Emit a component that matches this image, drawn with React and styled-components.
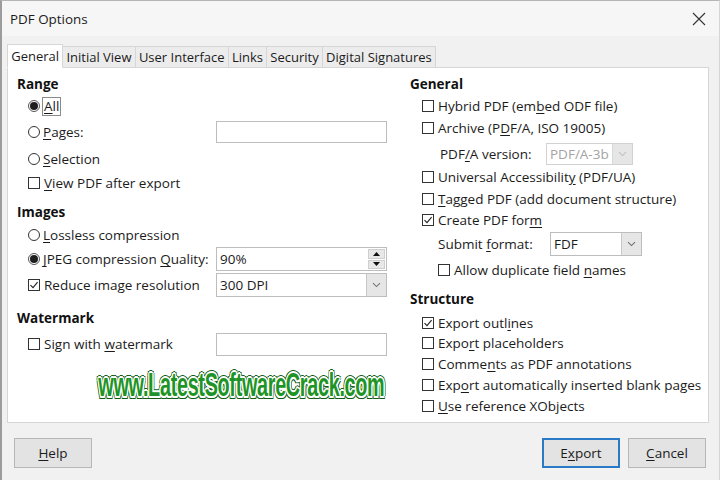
import React from "react";
import styled, { createGlobalStyle } from "styled-components";

const Global = createGlobalStyle`
  html, body { margin: 0; padding: 0; background: #f0f0f0; }
  body { font-family: "Open Sans", "Noto Sans", sans-serif; color: #1b1b1b; }
  * { box-sizing: border-box; }
`;

const Dialog = styled.div`
  position: relative;
  width: 720px;
  height: 480px;
  background: #f1f1f1;
  border-left: 2px solid #9c9c9c;
  border-top: 1px solid #b5b5b5;
  border-right: 1px solid #d6d6d6;
  display: flex;
  flex-direction: column;
  overflow: hidden;
`;

const TitleBar = styled.div`
  height: 35px;
  display: flex;
  align-items: center;
  justify-content: space-between;
  padding: 0 12px 0 8px;
  font-size: 13.4px;
  background: #f6f6f6;
`;

const Close = styled.span`
  display: flex;
  width: 16px;
  height: 16px;
`;

const TabBar = styled.div`
  display: flex;
  align-items: flex-end;
  padding-left: 5px;
  margin-top: 7px;
  height: 24px;
  position: relative;
  z-index: 1;
`;

const Tab = styled.div`
  font-size: 13px;
  padding: 0 3.2px;
  height: ${(p) => (p.$active ? "24px" : "21px")};
  display: flex;
  align-items: center;
  background: ${(p) => (p.$active ? "#ffffff" : "#ececec")};
  border: 1px solid #d6d6d6;
  border-bottom: ${(p) => (p.$active ? "1px solid #ffffff" : "none")};
  margin-left: ${(p) => (p.$active ? "0" : "-1px")};
  margin-bottom: ${(p) => (p.$active ? "-1px" : "0")};
  white-space: nowrap;
`;

const Panel = styled.div`
  margin: 0 10px 0 5px;
  height: 356px;
  background: #ffffff;
  border: 1px solid #d6d6d6;
  display: grid;
  grid-template-columns: 370px 1fr;
  column-gap: 23px;
  padding: 6px 0 0 9px;
`;

const Column = styled.div`
  display: flex;
  flex-direction: column;
`;

const Heading = styled.div`
  height: 20px;
  display: flex;
  align-items: center;
  font-size: 13.5px;
  font-weight: 700;
  margin-top: ${(p) => p.$mt || 0}px;
  color: #111;
`;

const Row = styled.div`
  display: flex;
  align-items: center;
  height: ${(p) => p.$h || 20}px;
  margin-top: ${(p) => p.$mt || 0}px;
  padding-left: ${(p) => p.$indent || 0}px;
  font-size: 13.5px;
  gap: ${(p) => (p.$tight ? 0 : 4)}px;
  white-space: nowrap;
`;

const Mn = styled.span`
  text-decoration: underline;
  text-underline-offset: 2px;
  text-decoration-thickness: 1px;
`;

const Focus = styled.span`
  outline: 1px solid #8a8a8a;
  outline-offset: 0px;
  padding: 0 1px;
  line-height: 17px;
`;

const RadioBox = styled.span`
  width: 12px;
  height: 12px;
  border-radius: 50%;
  border: 1px solid ${(p) => (p.$on ? "#555" : "#333")};
  background: #fff;
  display: inline-flex;
  align-items: center;
  justify-content: center;
  flex: none;
  margin-right: -1px;
  &::after {
    content: "";
    width: 8px;
    height: 8px;
    border-radius: 50%;
    background: #1e1e1e;
    display: ${(p) => (p.$on ? "block" : "none")};
  }
`;

const CheckBox = styled.span`
  width: 12px;
  height: 12px;
  border: 1px solid #333;
  background: #fff;
  display: inline-flex;
  align-items: center;
  justify-content: center;
  flex: none;
`;

const Radio = ({ on }) => <RadioBox $on={on} />;

const Check = ({ on }) => (
  <CheckBox>
    {on && (
      <svg width="10" height="10" viewBox="0 0 10 10">
        <path d="M1.5 5.2 L4 7.6 L8.6 2.2" fill="none" stroke="#222" strokeWidth="1.1" />
      </svg>
    )}
  </CheckBox>
);

const Field = styled.div`
  margin-left: ${(p) => (p.$auto ? "auto" : "0")};
  width: ${(p) => p.$w}px;
  height: ${(p) => p.$h || 22}px;
  border: 1px solid ${(p) => (p.$disabled ? "#d2d2d2" : "#bdbdbd")};
  background: #fff;
  display: flex;
  align-items: stretch;
  font-size: 13.5px;
  color: ${(p) => (p.$disabled ? "#a3a3a3" : "#1b1b1b")};
`;

const FieldText = styled.div`
  flex: 1;
  display: flex;
  align-items: center;
  padding-left: 3px;
`;

const DropBtn = styled.div`
  width: 20px;
  background: #e6e6e6;
  border-left: 1px solid ${(p) => (p.$disabled ? "#d8d8d8" : "#c8c8c8")};
  display: flex;
  align-items: center;
  justify-content: center;
`;

const SpinCol = styled.div`
  width: 19px;
  display: flex;
  flex-direction: column;
  gap: 1px;
  padding: 1px;
`;

const SpinBtn = styled.div`
  flex: 1;
  background: #e8e8e8;
  border: 1px solid #cfcfcf;
  display: flex;
  align-items: center;
  justify-content: center;
`;

const FieldLabel = styled.span`
  width: ${(p) => p.$w}px;
  flex: none;
`;

const Chevron = ({ color = "#777" }) => (
  <svg width="9" height="6" viewBox="0 0 9 6">
    <path d="M1 1.2 L4.5 4.6 L8 1.2" fill="none" stroke={color} strokeWidth="1.1" />
  </svg>
);

const Tri = ({ up }) => (
  <svg width="7" height="4" viewBox="0 0 7 4">
    <path d={up ? "M0 4 L3.5 0 L7 4 Z" : "M0 0 L3.5 4 L7 0 Z"} fill="#111" />
  </svg>
);

const Select = ({ w, value, disabled, h = 23 }) => (
  <Field $w={w} $h={h} $disabled={disabled}>
    <FieldText>{value}</FieldText>
    <DropBtn $disabled={disabled}>
      <Chevron color={disabled ? "#c0c0c0" : "#6f6f6f"} />
    </DropBtn>
  </Field>
);

const Footer = styled.div`
  flex: 1;
  display: flex;
  align-items: flex-start;
  justify-content: space-between;
  padding: 15px 13px 0 12px;
`;

const BtnGroup = styled.div`
  display: flex;
  gap: 8px;
`;

const Button = styled.div`
  width: 78px;
  height: 30px;
  font-size: 13.5px;
  background: #e3e3e3;
  border: ${(p) => (p.$primary ? "2px solid #2a7bc7" : "1px solid #b7b7b7")};
  display: flex;
  align-items: center;
  justify-content: center;
  color: #1b1b1b;
`;

const Watermark = styled.div`
  position: absolute;
  left: 92px;
  top: 362px;
  width: 294px;
  height: 44px;
  display: flex;
  align-items: center;
  justify-content: center;
  pointer-events: none;
`;

const WaterText = styled.span`
  font-family: "Liberation Sans", Arial, sans-serif;
  font-weight: 700;
  font-size: 33px;
  letter-spacing: -0.5px;
  color: #1f9426;
  display: inline-block;
  transform: scaleX(0.6);
  white-space: nowrap;
  text-shadow:
    1px 0 0 #fff, -1px 0 0 #fff, 0 1px 0 #fff, 0 -1px 0 #fff,
    2px 0 0 #fff, -2px 0 0 #fff, 0 2px 0 #fff, 0 -2px 0 #fff,
    1.5px 1.5px 0 #fff, -1.5px 1.5px 0 #fff, 1.5px -1.5px 0 #fff, -1.5px -1.5px 0 #fff,
    3px 0 0 #0f5a14, -3px 0 0 #0f5a14, 0 3px 0 #0f5a14, 0 -3px 0 #0f5a14,
    2.5px 2.5px 0 #0f5a14, -2.5px 2.5px 0 #0f5a14, 2.5px -2.5px 0 #0f5a14, -2.5px -2.5px 0 #0f5a14;
`;

export default function App() {
  const tabs = ["General", "Initial View", "User Interface", "Links", "Security", "Digital Signatures"];
  return (
    <>
      <Global />
      <Dialog>
        <TitleBar>
          <span>PDF Options</span>
          <Close>
            <svg width="16" height="16" viewBox="0 0 16 16">
              <path d="M2 2 L14 14 M14 2 L2 14" stroke="#333" strokeWidth="1.1" />
            </svg>
          </Close>
        </TitleBar>
        <TabBar>
          {tabs.map((t, i) => (
            <Tab key={t} $active={i === 0}>
              {t}
            </Tab>
          ))}
        </TabBar>
        <Panel>
          <Column>
            <Heading>Range</Heading>
            <Row $indent={11} $mt={2}>
              <Radio on />
              <Focus>
                <Mn>A</Mn>ll
              </Focus>
            </Row>
            <Row $indent={11} $h={22} $mt={5}>
              <Radio />
              <span>
                <Mn>P</Mn>ages:
              </span>
              <Field $auto $w={171} $h={22} />
            </Row>
            <Row $indent={11} $mt={6}>
              <Radio />
              <span>
                <Mn>S</Mn>election
              </span>
            </Row>
            <Row $indent={11} $mt={4}>
              <Check />
              <span>
                <Mn>V</Mn>iew PDF after export
              </span>
            </Row>

            <Heading $mt={9}>Images</Heading>
            <Row $indent={11} $mt={3}>
              <Radio />
              <span>
                <Mn>L</Mn>ossless compression
              </span>
            </Row>
            <Row $indent={11} $h={24} $mt={2}>
              <Radio on />
              <span>
                <Mn>J</Mn>PEG compression&nbsp;<Mn>Q</Mn>uality:
              </span>
              <Field $auto $w={171} $h={24}>
                <FieldText>90%</FieldText>
                <SpinCol>
                  <SpinBtn>
                    <Tri up />
                  </SpinBtn>
                  <SpinBtn>
                    <Tri />
                  </SpinBtn>
                </SpinCol>
              </Field>
            </Row>
            <Row $indent={11} $h={24} $mt={2}>
              <Check on />
              <span>
                Reduce ima<Mn>g</Mn>e resolution
              </span>
              <Field $auto $w={171} $h={24}>
                <FieldText>300 DPI</FieldText>
                <DropBtn>
                  <Chevron />
                </DropBtn>
              </Field>
            </Row>

            <Heading $mt={11}>Watermark</Heading>
            <Row $indent={11} $h={22} $mt={5}>
              <Check />
              <span>
                Sign with <Mn>w</Mn>atermark
              </span>
              <Field $auto $w={171} $h={23} />
            </Row>
          </Column>

          <Column>
            <Heading>General</Heading>
            <Row $indent={12} $mt={2}>
              <Check />
              <span>
                Hybrid PDF (em<Mn>b</Mn>ed ODF file)
              </span>
            </Row>
            <Row $indent={12} $mt={2}>
              <Check />
              <span>
                Archive (P<Mn>D</Mn>F/A, ISO 19005)
              </span>
            </Row>
            <Row $indent={30} $h={22} $mt={5} $tight>
              <FieldLabel $w={106}>
                PDF<Mn>/</Mn>A version:
              </FieldLabel>
              <Select w={87} h={22} value="PDF/A-3b" disabled />
            </Row>
            <Row $indent={12} $mt={2}>
              <Check />
              <span>
                Universal Accessibilit<Mn>y</Mn> (PDF/UA)
              </span>
            </Row>
            <Row $indent={12} $mt={2}>
              <Check />
              <span>
                <Mn>T</Mn>agged PDF (add document structure)
              </span>
            </Row>
            <Row $indent={12} $mt={1}>
              <Check on />
              <span>
                Create PDF for<Mn>m</Mn>
              </span>
            </Row>
            <Row $indent={28} $h={24} $mt={2} $tight>
              <FieldLabel $w={112}>
                Submit <Mn>f</Mn>ormat:
              </FieldLabel>
              <Select w={92} h={24} value="FDF" />
            </Row>
            <Row $indent={28} $mt={4}>
              <Check />
              <span>
                Allow duplicate field <Mn>n</Mn>ames
              </span>
            </Row>

            <Heading $mt={9}>Structure</Heading>
            <Row $indent={12} $mt={4}>
              <Check on />
              <span>
                Export outl<Mn>i</Mn>nes
              </span>
            </Row>
            <Row $indent={12} $mt={0}>
              <Check />
              <span>
                Expo<Mn>r</Mn>t placeholders
              </span>
            </Row>
            <Row $indent={12} $mt={1}>
              <Check />
              <span>
                Comme<Mn>n</Mn>ts as PDF annotations
              </span>
            </Row>
            <Row $indent={12} $mt={1}>
              <Check />
              <span>
                Exp<Mn>o</Mn>rt automatically inserted blank pages
              </span>
            </Row>
            <Row $indent={12} $mt={1}>
              <Check />
              <span>
                <Mn>U</Mn>se reference XObjects
              </span>
            </Row>
          </Column>
        </Panel>
        <Footer>
          <Button>
            <span>
              <Mn>H</Mn>elp
            </span>
          </Button>
          <BtnGroup>
            <Button $primary>
              <span>
                E<Mn>x</Mn>port
              </span>
            </Button>
            <Button>
              <span>
                <Mn>C</Mn>ancel
              </span>
            </Button>
          </BtnGroup>
        </Footer>
        <Watermark>
          <WaterText>www.LatestSoftwareCrack.com</WaterText>
        </Watermark>
      </Dialog>
    </>
  );
}
